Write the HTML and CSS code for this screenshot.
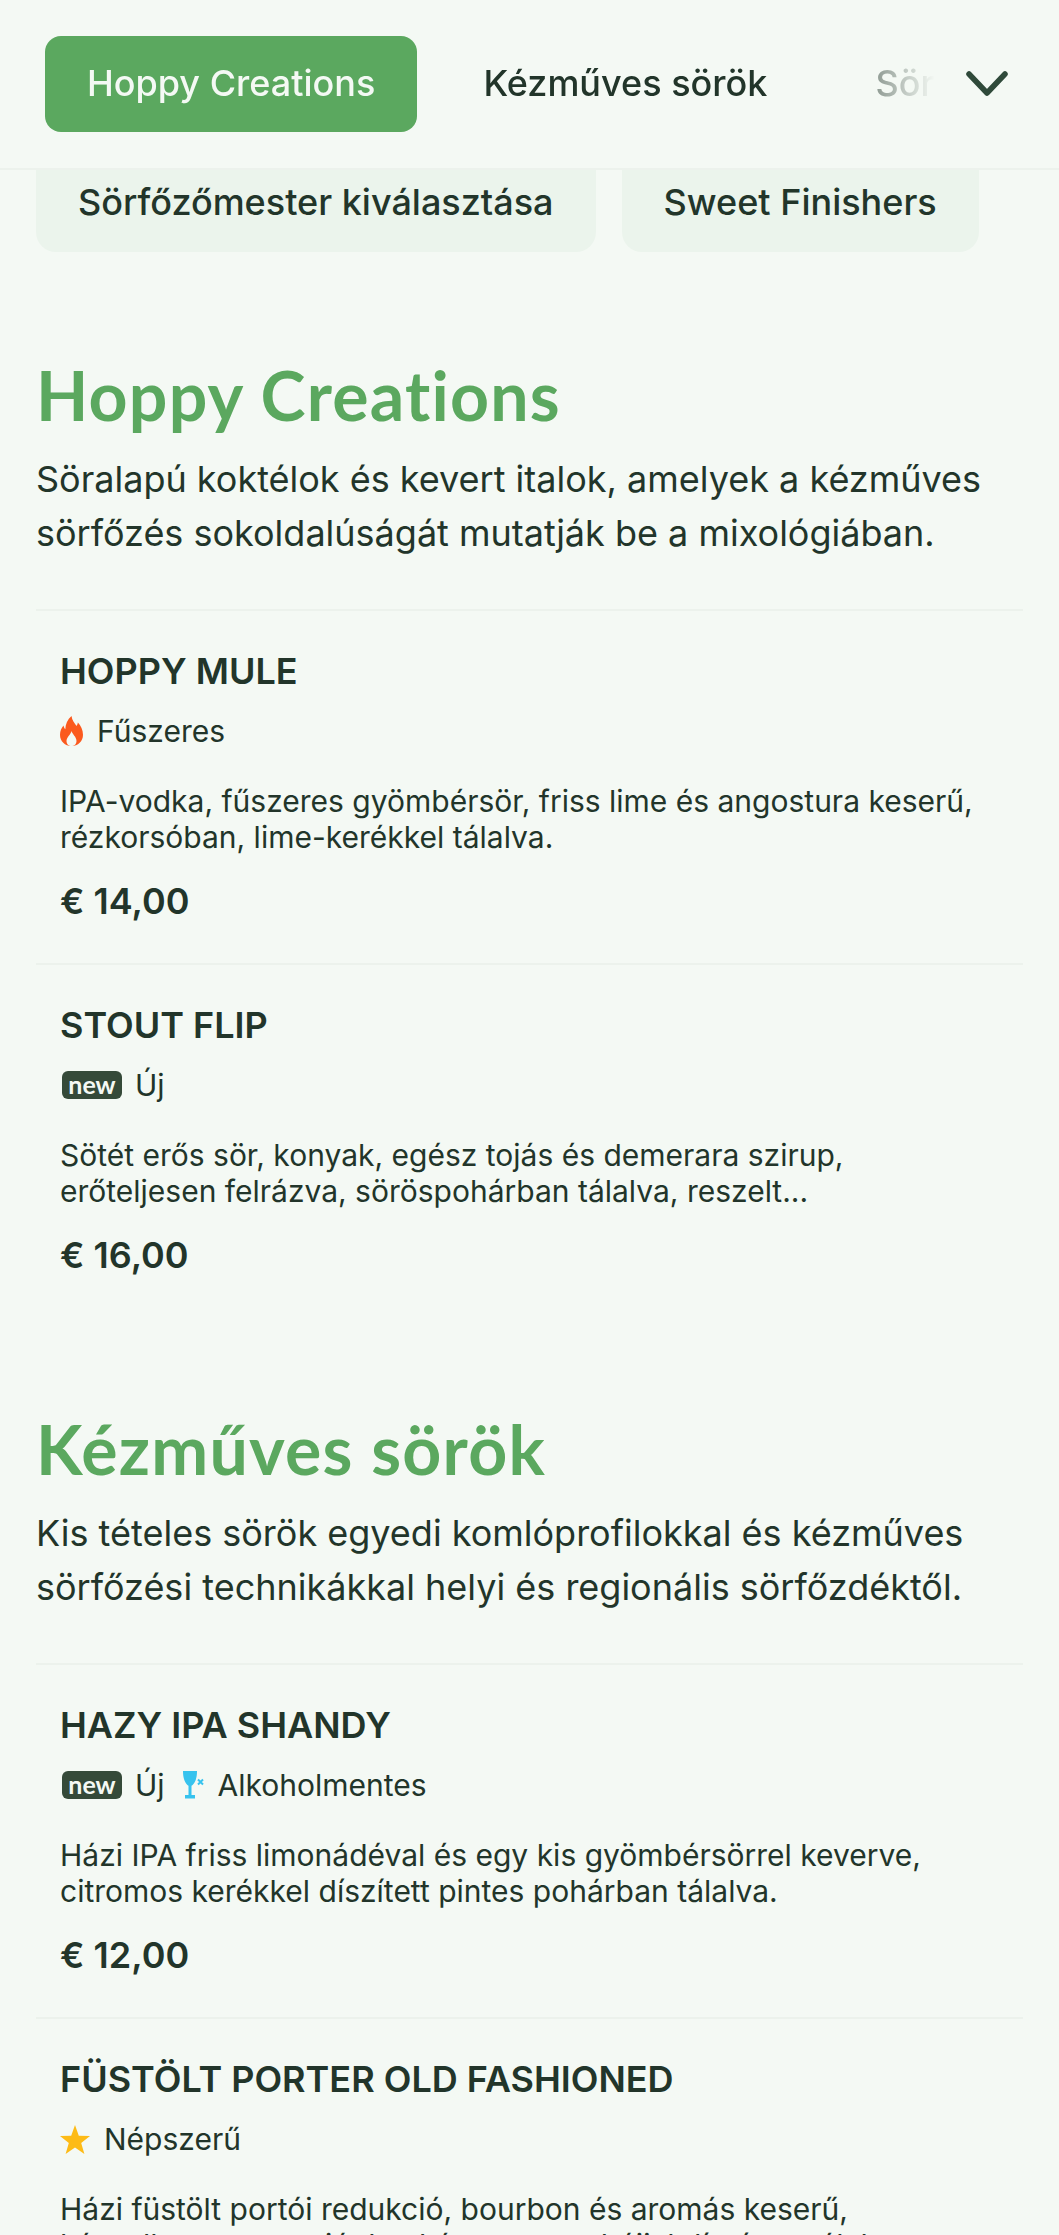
FILE: index.html
```html
<!DOCTYPE html>
<html lang="hu">
<head>
<meta charset="utf-8">
<title>Menu</title>
<link rel="stylesheet" href="styles.css">
</head>
<body>
<header class="topbar">
  <nav class="tabs">
    <a class="tab tab-active">Hoppy Creations</a>
    <a class="tab">Kézműves sörök</a>
    <a class="tab">Sörfőzőmester kiválasztása</a>
  </nav>
  <svg class="chevron" viewBox="0 0 44 28" width="44" height="28"><path d="M4 4 L22 23 L40 4" fill="none" stroke="#2f4a3a" stroke-width="5.5" stroke-linecap="round" stroke-linejoin="round"/></svg>
</header>
<div class="pills">
  <a class="pill">Sörfőzőmester kiválasztása</a>
  <a class="pill">Sweet Finishers</a>
</div>
<main>
  <section class="section">
    <h2 class="section-title">Hoppy Creations</h2>
    <p class="section-desc">Söralapú koktélok és kevert italok, amelyek a kézműves sörfőzés sokoldalúságát mutatják be a mixológiában.</p>
    <article class="item">
      <h3 class="item-name">HOPPY MULE</h3>
      <div class="tags">
        <span class="tag">
          <svg class="ico" width="23" height="30" viewBox="0 0 23 30"><path d="M11.500 0 C12 4.500 14.500 6.800 16.500 10 C17.300 9 17.800 7.800 17.900 6.600 C20.800 9.800 23 14 23 18.800 C23 25.500 18 30 11.500 30 C5 30 0 25.500 0 18.800 C0 15 1.500 11.800 3.500 9.500 C3.800 11 4.300 12.300 5.300 13.300 C5.500 8.300 7.500 3.500 11.500 0 Z" fill="#fb5a1e"/><path d="M11.500 15 C12.300 18.300 16.500 20.800 16.500 25 C16.500 28 14.300 30 11.500 30 C8.700 30 6.500 28 6.500 25 C6.500 21.300 10.500 19 11.500 15 Z" fill="#f4f9f4"/></svg>
          Fűszeres</span>
      </div>
      <p class="item-desc">IPA-vodka, fűszeres gyömbérsör, friss lime és angostura keserű, rézkorsóban, lime-kerékkel tálalva.</p>
      <div class="price">€ 14,00</div>
    </article>
    <article class="item">
      <h3 class="item-name">STOUT FLIP</h3>
      <div class="tags">
        <span class="tag"><span class="badge">new</span>Új</span>
      </div>
      <p class="item-desc">Sötét erős sör, konyak, egész tojás és demerara szirup, erőteljesen felrázva, söröspohárban tálalva, reszelt...</p>
      <div class="price">€ 16,00</div>
    </article>
  </section>
  <section class="section section-next">
    <h2 class="section-title">Kézműves sörök</h2>
    <p class="section-desc">Kis tételes sörök egyedi komlóprofilokkal és kézműves sörfőzési technikákkal helyi és regionális sörfőzdéktől.</p>
    <article class="item">
      <h3 class="item-name">HAZY IPA SHANDY</h3>
      <div class="tags">
        <span class="tag"><span class="badge">new</span>Új</span>
        <span class="tag">
          <svg class="ico" width="21" height="28" viewBox="0 0 21 28"><path d="M0 0 H14 C14 4 13.500 7 12.500 9.500 C11.500 12 10 14 8.500 14.800 V24 H12 V27.500 H2 V24 H5.500 V14.800 C4 14 2.500 12 1.500 9.500 C0.500 7 0 4 0 0 Z" fill="#36c3ee"/><path d="M15 8.500 L20 13.500 M20 8.500 L15 13.500" stroke="#36c3ee" stroke-width="2" fill="none"/></svg>
          Alkoholmentes</span>
      </div>
      <p class="item-desc">Házi IPA friss limonádéval és egy kis gyömbérsörrel keverve, citromos kerékkel díszített pintes pohárban tálalva.</p>
      <div class="price">€ 12,00</div>
    </article>
    <article class="item">
      <h3 class="item-name">FÜSTÖLT PORTER OLD FASHIONED</h3>
      <div class="tags">
        <span class="tag">
          <svg class="ico" width="30" height="29" viewBox="0 0 30 29"><path d="M15 0 L18.800 10.700 L30 11.100 L21.200 18 L24.400 28.900 L15 22.500 L5.600 28.900 L8.800 18 L0 11.100 L11.200 10.700 Z" fill="#fdbb16"/></svg>
          Népszerű</span>
      </div>
      <p class="item-desc">Házi füstölt portói redukció, bourbon és aromás keserű, kézzelkevert nagy jégkockán, narancshéjjal díszítve, tálalva.</p>
      <div class="price">€ 15,00</div>
    </article>
  </section>
</main>
</body>
</html>
```
FILE: styles.css
```css
* { box-sizing: border-box; }
html, body { margin: 0; padding: 0; }
body {
  height: 2235px;
  overflow: hidden;
  background: #f4f9f4;
  color: #22352a;
  font-family: Inter, "Liberation Sans", sans-serif;
}
.topbar {
  position: relative;
  z-index: 2;
  height: 170px;
  display: flex;
  align-items: center;
  padding-left: 45px;
  background: #f4f9f4;
  border-bottom: 2px solid #ecf2ec;
}
.tabs {
  display: flex;
  align-items: center;
  gap: 24px;
  width: 890px;
  overflow: hidden;
  white-space: nowrap;
  -webkit-mask-image: linear-gradient(to right, #000 86%, transparent 100%);
  mask-image: linear-gradient(to right, #000 86%, transparent 100%);
}
.tab {
  flex: none;
  padding: 0 42px;
  height: 96px;
  line-height: 94px;
  font-size: 36px;
  font-weight: 500;
  border-radius: 16px;
  color: #22352a;
}
.tab-active { background: #5ba85f; color: #f4f9f4; }
.chevron { flex: none; margin-left: 30px; }
.pills {
  display: flex;
  gap: 26px;
  padding: 0 36px;
  margin-top: -60px;
}
.pill {
  padding: 60px 42px 0;
  height: 142px;
  line-height: 64px;
  font-size: 36px;
  font-weight: 500;
  border-radius: 20px;
  background: #ebf4ec;
  white-space: nowrap;
}
.section { padding: 0 36px; }
.section-title {
  margin: 0;
  font-family: Lato, "Open Sans", sans-serif;
  font-size: 68px;
  font-weight: 700;
  letter-spacing: 1.200px;
  font-variant-ligatures: none;
  line-height: 80px;
  color: #5ba85f;
  padding-top: 103px;
}
.section-next .section-title { padding-top: 0; margin-top: 92px; }
.section-desc {
  margin: 17px 0 49px;
  font-size: 36px;
  line-height: 54px;
}
.item {
  padding: 38px 24px 40px;
  border-top: 2px solid #ecf2ec;
}
.item-name {
  margin: 0;
  font-size: 36px;
  font-weight: 600;
  line-height: 44px;
}
.tags {
  display: flex;
  align-items: center;
  gap: 18px;
  margin-top: 18px;
  height: 40px;
}
.tag {
  display: flex;
  align-items: center;
  gap: 14px;
  font-size: 30px;
}
.ico { flex: none; }
.badge {
  font-family: Lato, sans-serif;
  font-size: 25px;
  font-weight: 700;
  line-height: 26px;
  height: 28px;
  width: 60px;
  margin-left: 2px;
  margin-right: -1px;
  text-align: center;
  background: #354a39;
  color: #f4f9f4;
  border-radius: 6px;
}
.item-desc {
  margin: 32px 0 0;
  font-size: 30px;
  line-height: 36px;
}
.price {
  margin-top: 24px;
  font-size: 36px;
  font-weight: 600;
  line-height: 44px;
}
```
